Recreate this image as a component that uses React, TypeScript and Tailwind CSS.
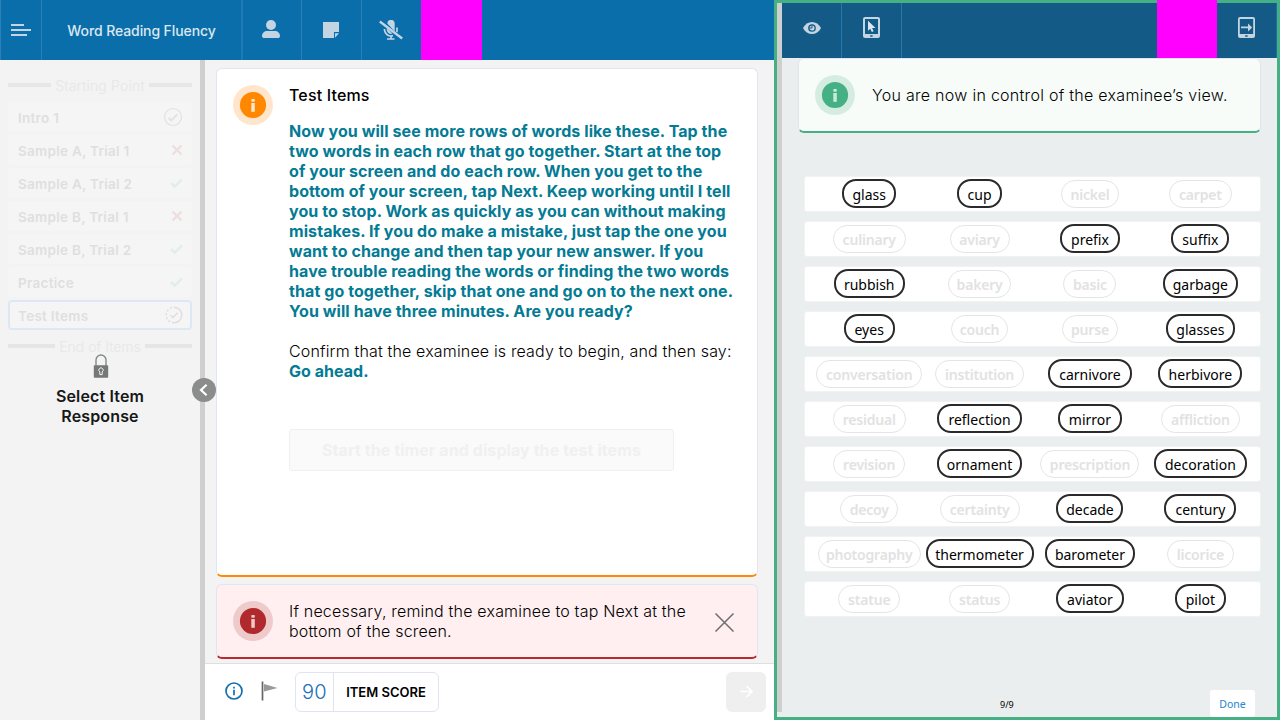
import React from "react";

type Word = [text: string, width: number, selected?: boolean];

const ROWS: Word[][] = [
  [["glass", 54, true], ["cup", 45, true], ["nickel", 58], ["carpet", 63]],
  [["culinary", 73], ["aviary", 60], ["prefix", 60, true], ["suffix", 58, true]],
  [["rubbish", 71, true], ["bakery", 63], ["basic", 53], ["garbage", 75, true]],
  [["eyes", 51, true], ["couch", 57], ["purse", 56], ["glasses", 69, true]],
  [["conversation", 106], ["institution", 89], ["carnivore", 84, true], ["herbivore", 84, true]],
  [["residual", 73], ["reflection", 85, true], ["mirror", 64, true], ["affliction", 79]],
  [["revision", 72], ["ornament", 85, true], ["prescription", 99], ["decoration", 93, true]],
  [["decoy", 58], ["certainty", 80], ["decade", 67, true], ["century", 72, true]],
  [["photography", 103], ["thermometer", 108, true], ["barometer", 90, true], ["licorice", 67]],
  [["statue", 62], ["status", 61], ["aviator", 68, true], ["pilot", 51, true]],
];

const INSTRUCTIONS = [
  "Now you will see more rows of words like these. Tap the",
  "two words in each row that go together. Start at the top",
  "of your screen and do each row. When you get to the",
  "bottom of your screen, tap Next. Keep working until I tell",
  "you to stop. Work as quickly as you can without making",
  "mistakes. If you do make a mistake, just tap the one you",
  "want to change and then tap your new answer. If you",
  "have trouble reading the words or finding the two words",
  "that go together, skip that one and go on to the next one.",
  "You will have three minutes. Are you ready?",
];

type Status = "done" | "wrong" | "right" | "partial";

const ITEMS: { label: string; status: Status }[] = [
  { label: "Intro 1", status: "done" },
  { label: "Sample A, Trial 1", status: "wrong" },
  { label: "Sample A, Trial 2", status: "right" },
  { label: "Sample B, Trial 1", status: "wrong" },
  { label: "Sample B, Trial 2", status: "right" },
  { label: "Practice", status: "right" },
  { label: "Test Items", status: "partial" },
];

function StatusIcon({ status }: { status: Status }) {
  if (status === "done")
    return (
      <svg className="mr-[9px]" width="20" height="20" viewBox="0 0 20 20" fill="none" stroke="#e2e2e2">
        <circle cx="10" cy="10" r="8.5" strokeWidth="1.2" />
        <path d="M5.5 10.8l2.8 2.7 6-6.2" strokeWidth="1.8" />
      </svg>
    );
  if (status === "partial")
    return (
      <svg className="mr-[7px]" width="18" height="18" viewBox="0 0 18 18" fill="none" stroke="#dedede">
        <path d="M9 1.2a7.8 7.8 0 0 1 0 15.6" strokeWidth="1.5" />
        <path d="M9 16.8a7.8 7.8 0 0 1 0-15.6" strokeWidth="1.6" strokeDasharray="2 2" />
        <path d="M5.5 9.2l2.5 2.4 4.5-4.8" strokeWidth="1.4" />
      </svg>
    );
  if (status === "wrong")
    return (
      <svg className="mr-[9px]" width="12" height="12" viewBox="0 0 12 12" stroke="#eedede" strokeWidth="2.4">
        <path d="M1.5 1.5l9 9M10.5 1.5l-9 9" />
      </svg>
    );
  return (
    <svg className="mr-[9px]" width="13" height="12" viewBox="0 0 13 12" fill="none" stroke="#e1ede8" strokeWidth="2.4">
      <path d="M1 6l3.8 3.6L12 2.4" />
    </svg>
  );
}

function InfoBadge({ ring, fill, glyph }: { ring: string; fill: string; glyph: string }) {
  return (
    <svg className="shrink-0" width="40" height="40" viewBox="0 0 40 40">
      <circle cx="20" cy="20" r="20" fill={ring} />
      <circle cx="20" cy="20" r="13.1" fill={fill} />
      <rect x="18.3" y="14" width="3.5" height="2.8" rx="0.8" fill={glyph} />
      <rect x="18.3" y="18" width="3.5" height="8.8" fill={glyph} />
    </svg>
  );
}

function Sidebar() {
  return (
    <aside className="relative flex w-[205px] shrink-0 flex-col border-r-[5px] border-[#cfcfcf] bg-[#f3f3f3] px-2">
      <div className="mt-[15px] flex h-5 items-center text-[#e6e6e6]">
        <i className="h-1 w-[43px] bg-[#e6e8e8]" />
        <span className="flex-1 whitespace-nowrap text-center text-[14px] font-light tracking-[0.2px]">Starting Point</span>
        <i className="h-1 w-[43px] bg-[#e6e8e8]" />
      </div>
      <ul className="mt-[7px] flex flex-col gap-[3px]">
        {ITEMS.map((item) => (
          <li
            key={item.label}
            className={
              item.status === "partial"
                ? "flex h-[30px] items-center justify-between rounded-[4px] border-2 border-[#dce8f3] bg-[#f5f5f5] pl-2"
                : "flex h-[30px] items-center justify-between rounded-[4px] bg-[#f5f5f5] pl-[10px]"
            }
          >
            <span className="pt-[2px] text-[13.5px] font-semibold tracking-[0.28px] text-[#dfdfdf]">{item.label}</span>
            <StatusIcon status={item.status} />
          </li>
        ))}
      </ul>
      <div className="mt-[6px] flex h-5 items-center text-[#e6e6e6]">
        <i className="h-1 w-[47px] bg-[#e5e5e5]" />
        <span className="flex-1 whitespace-nowrap text-center text-[14px] font-light">End of Items</span>
        <i className="h-1 w-[47px] bg-[#e5e5e5]" />
      </div>
      <div className="-mt-[2px] flex flex-col items-center">
        <svg className="ml-px" width="16" height="24" viewBox="0 0 16 24">
          <path d="M3 12V6a5 5 0 0 1 10 0v6" fill="none" stroke="#868988" strokeWidth="1.4" />
          <rect x="0.8" y="11.2" width="14.4" height="12.6" rx="0.8" fill="#747877" />
          <path d="M6.8 20.6v-2.7a2.2 2.2 0 1 1 2.4 0v2.7z" fill="none" stroke="#f3f3f3" strokeWidth="1" />
        </svg>
        <p className="mt-[8px] text-center text-[16px] font-semibold leading-5 tracking-[0.15px] text-[#171717]">
          Select Item
          <br />
          Response
        </p>
      </div>
      <span className="absolute -right-[16px] top-[318px] z-10 flex size-6 items-center justify-center rounded-full bg-[#8a8d8c]">
        <svg width="12" height="14" viewBox="0 0 12 14" fill="none" stroke="#fff" strokeWidth="2.2">
          <path d="M8.6 1.8L3 7l5.6 5.2" />
        </svg>
      </span>
    </aside>
  );
}

function ExaminerHeader() {
  return (
    <header className="flex h-[60px] shrink-0 bg-[#0a6eab]">
      <div className="flex w-[42px] items-center border-x border-[#2b80b8] pl-[10px]">
        <svg width="20" height="12" viewBox="0 0 20 12" fill="#c3d4e3">
          <path d="M0 0h13v2H0zM0 5h20v2H0zM0 10h16v2H0z" />
        </svg>
      </div>
      <div className="flex w-[201px] items-center justify-center border-r-2 border-[#1b7ab7] text-[14px] font-medium tracking-[-0.09px] text-[#dbe7f0]">
        Word Reading Fluency
      </div>
      <div className="flex w-[59px] items-center justify-center border-r border-[#2b80b8]">
        <svg className="mb-[2px] mr-[3px]" width="18" height="18" viewBox="0 0 18 18" fill="#c3d4e3">
          <circle cx="9" cy="5" r="5" />
          <path d="M0 16c0-3 2.5-5 5-5h8c2.5 0 5 2 5 5 0 1.300-.7 2-1.800 2H1.800C.7 18 0 17.300 0 16z" />
        </svg>
      </div>
      <div className="flex w-[60px] items-center justify-center border-r border-[#2b80b8]">
        <svg className="mr-px" width="16" height="16" viewBox="0 0 16 16" fill="#c3d4e3">
          <path d="M0 0h16v10h-5v6H0zM12 11.3h4L12 15.7z" />
        </svg>
      </div>
      <div className="flex w-[59px] items-center justify-center">
        <svg className="mr-px" width="24" height="20" viewBox="0 0 24 20" fill="none" stroke="#c3d4e3">
          <path d="M8.300 3.500a3.700 3.700 0 0 1 7.400 0v8z" fill="#c3d4e3" stroke="none" />
          <path d="M8.300 8.500v1.700a3.500 3.500 0 0 0 4.500 3.200z" fill="#c3d4e3" strokeWidth="0.8" />
          <path d="M5.500 9v1.200a6.400 6.400 0 0 0 8.500 5.400M18 7.500v2.700c0 .8-.1 1.200-.4 1.900M12 16v3M8 19h7.500" strokeWidth="1.7" />
          <path d="M.8 1.500l22.400 17" strokeWidth="2.3" />
        </svg>
      </div>
      <div className="w-[61px] bg-[#ff00ff]" />
    </header>
  );
}

function ExaminerPane() {
  return (
    <section className="flex w-[774px] flex-col">
      <ExaminerHeader />
      <div className="flex flex-1">
        <Sidebar />
        <main className="flex flex-1 flex-col bg-[#f3f3f3]">
          <div className="flex h-[603px] flex-col gap-[7px] pl-[11px] pr-4 pt-2">
            <article className="flex h-[509px] gap-4 rounded-md border border-b-2 border-[#e1e5f1] border-b-[#ff8c00] bg-white pl-4 pt-4">
              <InfoBadge ring="#ffe5cb" fill="#ff8800" glyph="#ffe5cb" />
              <div className="whitespace-nowrap text-[16px] leading-5">
                <h1 className="font-medium tracking-[0.16px] text-black">Test Items</h1>
                <div className="mt-4 font-bold tracking-[0.08px] text-[#047b94]">
                  {INSTRUCTIONS.map((line) => (
                    <p key={line}>{line}</p>
                  ))}
                </div>
                <p className="mt-5 font-light tracking-[0.16px] text-black">Confirm that the examinee is ready to begin, and then say:</p>
                <p className="font-bold tracking-[0.04px] text-[#047b94]">Go ahead.</p>
                <button className="mt-12 flex h-[42px] w-[385px] items-center justify-center rounded-[3px] border border-[#f0f0f0] bg-[#fafafa] text-[16px] font-bold tracking-[0.08px] text-[#f0f0f0]">
                  Start the timer and display the test items
                </button>
              </div>
            </article>
            <article className="flex h-[75px] rounded-md border border-b-2 border-[#e1e5f1] border-b-[#b52b30] bg-[#ffeff0] pl-4 pt-4">
              <InfoBadge ring="#efcaca" fill="#b02a2d" glyph="#efcaca" />
              <p className="ml-4 whitespace-nowrap text-[16px] font-light leading-5 tracking-[0.19px] text-black">
                If necessary, remind the examinee to tap Next at the
                <br />
                bottom of the screen.
              </p>
              <svg className="ml-auto mr-[23px] mt-3" width="19" height="19" viewBox="0 0 19 19" stroke="#6d6d70" strokeWidth="1.5">
                <path d="M.5.5l18 18M18.500.5l-18 18" />
              </svg>
            </article>
          </div>
          <footer className="flex flex-1 items-start border-t border-[#dfdfdf] bg-white pl-5 pr-2 pt-2">
            <svg className="mt-[10px]" width="18" height="18" viewBox="0 0 18 18" fill="none" stroke="#156fae">
              <circle cx="9" cy="9" r="8" strokeWidth="1.7" />
              <path d="M9 4.7v1.8M9 7.7v5.5" strokeWidth="1.7" />
            </svg>
            <svg className="ml-[18px] mt-[9px]" width="17" height="20" viewBox="0 0 17 20">
              <path d="M1.500.5v19" stroke="#666" strokeWidth="1.7" />
              <path d="M3 3l13.500 4L3 10.500z" fill="#999" />
            </svg>
            <div className="ml-[17px] flex h-10 w-[144px] rounded-md border border-[#e0e4f2]">
              <span className="flex w-[38px] items-center justify-center border-r border-[#e0e4f2] text-[20px] font-light tracking-[0.3px] text-[#1a6eb8]">90</span>
              <span className="flex flex-1 items-center justify-center whitespace-nowrap pt-[2px] text-[13px] font-semibold text-black">ITEM SCORE</span>
            </div>
            <span className="ml-auto flex size-10 items-center justify-center rounded-md bg-[#efefef]">
              <svg className="mb-[2px]" width="13" height="13" viewBox="0 0 13 13" fill="none" stroke="#fff" strokeWidth="1.7">
                <path d="M.5 6.500h11.500M6.500 1l5.500 5.500-5.500 5.500" />
              </svg>
            </span>
          </footer>
        </main>
      </div>
    </section>
  );
}

function ExamineeHeader() {
  return (
    <header className="flex h-[55px] shrink-0 bg-[#135b86]">
      <div className="flex w-[60px] justify-center border-r border-[#2878ad] pt-[19px]">
        <svg width="18" height="12" viewBox="0 0 18 12">
          <path d="M0 6C2 2 5.400 0 9 0s7 2 9 6c-2 4-5.400 6-9 6S2 10 0 6z" fill="#c3d4e3" />
          <circle cx="9" cy="6" r="3.2" fill="none" stroke="#135b86" strokeWidth="1.3" />
          <path d="M9 3v3H6" fill="none" stroke="#135b86" strokeWidth="1" />
        </svg>
      </div>
      <div className="flex w-[60px] justify-center border-r border-[#2878ad] pt-[14px]">
        <svg width="17" height="21" viewBox="0 0 17 21">
          <path fillRule="evenodd" d="M2 0h13a2 2 0 0 1 2 2v17a2 2 0 0 1-2 2H2a2 2 0 0 1-2-2V2a2 2 0 0 1 2-2zM2 2v15h13V2zM7.200 18.200v1.500h2.400v-1.500z" fill="#c3d4e3" />
          <path d="M5 3.800v10l2.300-2.100 1.500 3.300 1.800-.8-1.500-3.200H12.500z" fill="#dce6ef" />
        </svg>
      </div>
      <div className="-mt-[3px] ml-auto w-[60px] bg-[#ff00ff]" />
      <div className="flex w-[60px] justify-center border-r border-[#1c6fab] pt-[14px]">
        <svg width="17" height="21" viewBox="0 0 17 21">
          <path fillRule="evenodd" d="M2 0h13a2 2 0 0 1 2 2v17a2 2 0 0 1-2 2H2a2 2 0 0 1-2-2V2a2 2 0 0 1 2-2zM1.800 2v15h13.400V2zM7.200 18.200v1.500h2.400v-1.500z" fill="#c3d4e3" />
          <path d="M3 9.600h7V6.400l4.200 4.100L10 14.500v-3.200H3z" fill="#c3d4e3" />
        </svg>
      </div>
    </header>
  );
}

function ExamineePane() {
  return (
    <section className="flex flex-1 border-[3px] border-[#45b083] bg-[#ebeeef]">
      <div className="h-[709px] w-[5px] shrink-0 bg-[#cfcfcf]" />
      <div className="flex flex-1 flex-col">
        <ExamineeHeader />
        <div className="ml-4 flex h-[75px] w-[463px] shrink-0 rounded-md border border-b-2 border-[#e1e5f1] border-b-[#45b083] bg-[#f7fcf9] pl-4 pt-4">
          <InfoBadge ring="#d5ede1" fill="#45b083" glyph="#c9ebdc" />
          <p className="ml-[17px] mt-2.5 whitespace-nowrap text-[16px] font-light leading-5 tracking-[0.28px] text-black">
            You are now in control of the examinee’s view.
          </p>
        </div>
        <div className="ml-[22px] mt-[43px] flex w-[457px] flex-col gap-[9px] font-['Noto_Sans',sans-serif] text-[14px]">
          {ROWS.map((row) => (
            <div key={row[0][0]} className="grid h-9 grid-cols-[110.4px_110.4px_110.4px_110.4px] rounded-[3px] border border-[#f1f3f3] bg-white pl-[9px]">
              {row.map(([text, width, selected]) => (
                <div key={text} className="flex justify-center">
                  <span
                    style={{ width }}
                    className={
                      selected
                        ? "mt-[2px] flex h-[29px] shrink-0 items-center justify-center whitespace-nowrap rounded-[14px] border-2 border-[#2a2a2a] pt-[2px] text-black"
                        : "mt-[3px] flex h-[28px] shrink-0 items-center justify-center whitespace-nowrap rounded-[14px] border-[1.5px] border-[#e5e5e5] pt-px font-semibold tracking-[-0.2px] text-[#e2e2e2]"
                    }
                  >
                    {text}
                  </span>
                </div>
              ))}
            </div>
          ))}
        </div>
        <div className="mt-auto flex items-end justify-between pl-[218px] pr-[22px]">
          <span className="mb-[5px] font-['Noto_Sans',sans-serif] text-[9px] leading-[14px] text-black">9/9</span>
          <button className="h-[27px] w-[45px] rounded-[3px] bg-white pt-[2px] font-['Noto_Sans',sans-serif] text-[10.5px] text-[#2585d0]">Done</button>
        </div>
      </div>
    </section>
  );
}

export default function App() {
  return (
    <div className="flex h-[720px] w-[1280px] overflow-hidden bg-[#f3f3f3] font-[Inter,sans-serif]">
      <ExaminerPane />
      <ExamineePane />
    </div>
  );
}
